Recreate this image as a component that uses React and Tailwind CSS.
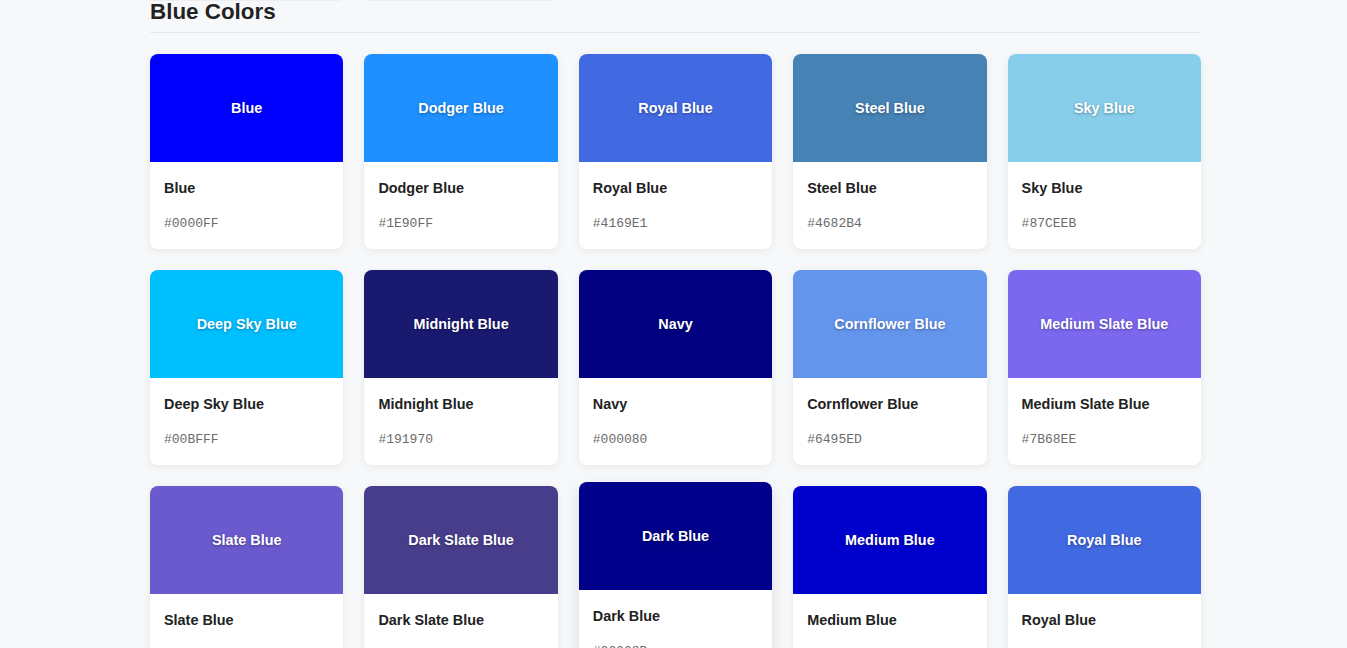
import React from "react";

const colors = [
  { name: "Blue", hex: "#0000FF" },
  { name: "Dodger Blue", hex: "#1E90FF" },
  { name: "Royal Blue", hex: "#4169E1" },
  { name: "Steel Blue", hex: "#4682B4" },
  { name: "Sky Blue", hex: "#87CEEB" },
  { name: "Deep Sky Blue", hex: "#00BFFF" },
  { name: "Midnight Blue", hex: "#191970" },
  { name: "Navy", hex: "#000080" },
  { name: "Cornflower Blue", hex: "#6495ED" },
  { name: "Medium Slate Blue", hex: "#7B68EE" },
  { name: "Slate Blue", hex: "#6A5ACD" },
  { name: "Dark Slate Blue", hex: "#483D8B" },
  { name: "Dark Blue", hex: "#00008B", hovered: true },
  { name: "Medium Blue", hex: "#0000CD" },
  { name: "Royal Blue", hex: "#4169E1" },
];

function ColorCard({ color }) {
  return (
    <div
      className={
        color.hovered
          ? "-translate-y-1 overflow-hidden rounded-lg bg-white shadow-[0_6px_16px_rgba(0,0,0,0.12)]"
          : "overflow-hidden rounded-lg bg-white shadow-[0_2px_8px_rgba(0,0,0,0.07)]"
      }
    >
      <div
        className="flex h-[108px] items-center justify-center pt-0.5 text-[14.4px] font-bold text-white [text-shadow:0_1px_3px_rgba(0,0,0,0.35)]"
        style={{ backgroundColor: color.hex }}
      >
        {color.name}
      </div>
      <div className="px-[14px] pb-4 pt-4">
        <p className="mb-[17px] text-[14.4px] font-bold leading-5 text-[#222]">
          {color.name}
        </p>
        <p className="font-['Liberation_Mono',monospace] text-[13px] leading-[18px] text-[#6b6b6b]">
          {color.hex}
        </p>
      </div>
    </div>
  );
}

export default function App() {
  return (
    <div className="min-h-screen bg-[#f7f8fa] font-['Liberation_Sans',Arial,sans-serif]">
      <div className="ml-[150px] w-[1051px]">
        {/* bottom edge of the controls above */}
        <div className="flex gap-7">
          <div className="h-px w-[190px] bg-[#eceef1]" />
          <div className="h-px w-[183px] bg-[#eceef1]" />
        </div>

        <h2 className="border-b border-[#e6e8eb] pb-[9px] text-[22.4px] font-bold leading-[22px] text-[#222]">
          Blue Colors
        </h2>

        <div className="mt-[21px] grid grid-cols-5 gap-[21px]">
          {colors.map((c, i) => (
            <ColorCard key={i} color={c} />
          ))}
        </div>
      </div>
    </div>
  );
}
